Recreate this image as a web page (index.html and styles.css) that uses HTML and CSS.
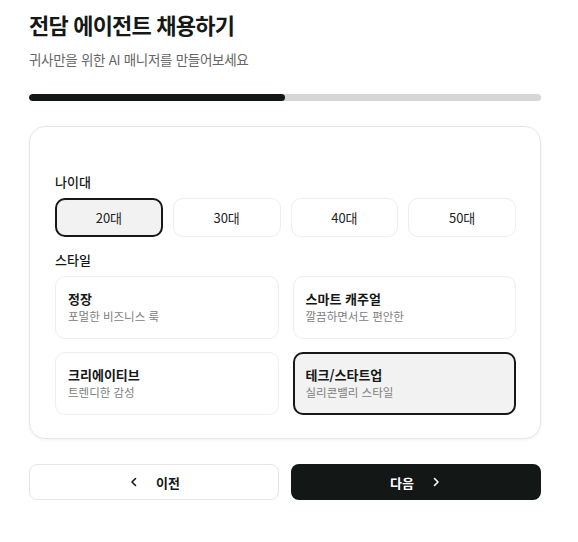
FILE: index.html
```html
<!DOCTYPE html>
<html lang="ko">
<head>
    <meta charset="UTF-8">
    <meta name="viewport" content="width=device-width, initial-scale=1.0">
    <title>전담 에이전트 채용하기</title>
    <link rel="stylesheet" href="styles.css">
</head>
<body>
    <div class="page">
        <div class="header">
            <h1>전담 에이전트 채용하기</h1>
            <p>귀사만을 위한 AI 매니저를 만들어보세요</p>
        </div>

        <!-- Progress -->
        <div class="progress"><div class="progress-fill" style="width: 50%"></div></div>

        <!-- Step card -->
        <div class="step-card">
            <div class="field">
                <h4>나이대</h4>
                <div class="age-grid">
                    <button class="option selected">20대</button>
                    <button class="option">30대</button>
                    <button class="option">40대</button>
                    <button class="option">50대</button>
                </div>
            </div>

            <div class="field">
                <h4>스타일</h4>
                <div class="style-grid">
                    <button class="style-option">
                        <span class="style-name">정장</span>
                        <span class="style-desc">포멀한 비즈니스 룩</span>
                    </button>
                    <button class="style-option">
                        <span class="style-name">스마트 캐주얼</span>
                        <span class="style-desc">깔끔하면서도 편안한</span>
                    </button>
                    <button class="style-option">
                        <span class="style-name">크리에이티브</span>
                        <span class="style-desc">트렌디한 감성</span>
                    </button>
                    <button class="style-option selected">
                        <span class="style-name">테크/스타트업</span>
                        <span class="style-desc">실리콘밸리 스타일</span>
                    </button>
                </div>
            </div>
        </div>

        <!-- Navigation -->
        <div class="nav">
            <button class="nav-btn prev">
                <svg width="12" height="12" viewBox="0 0 12 12"><path d="M7.5 2.5 4 6l3.5 3.5" fill="none" stroke="currentColor" stroke-width="1.6" stroke-linecap="round" stroke-linejoin="round"/></svg>
                이전
            </button>
            <button class="nav-btn next">
                다음
                <svg width="12" height="12" viewBox="0 0 12 12"><path d="M4.5 2.5 8 6 4.5 9.5" fill="none" stroke="currentColor" stroke-width="1.6" stroke-linecap="round" stroke-linejoin="round"/></svg>
            </button>
        </div>
    </div>
</body>
</html>
```

FILE: styles.css
```css
body {
    font-family: "Noto Sans CJK KR", "Noto Sans", sans-serif;
    background-color: #fff;
    color: #151816;
    margin: 0;
    padding: 0;
}
.page {
    width: 512px;
    margin-left: 29px;
    padding-top: 9px;
}
.header h1 {
    font-size: 22px;
    font-weight: 700;
    letter-spacing: -0.8px;
    line-height: 30px;
    margin: 0;
}
.header p {
    font-size: 13.5px;
    color: #666;
    letter-spacing: -0.3px;
    line-height: 18px;
    margin: 11px 0 0;
}

/* Progress */
.progress {
    height: 7px;
    background-color: #d6d6d6;
    border-radius: 4px;
    margin-top: 26px;
    overflow: hidden;
}
.progress-fill {
    height: 100%;
    background-color: #131715;
    border-radius: 4px;
}

/* Step card */
.step-card {
    margin-top: 25px;
    border: 1px solid #e6e6e6;
    border-radius: 16px;
    padding: 46px 24px 23px 25px;
    box-shadow: 0 1px 3px rgba(0, 0, 0, 0.06);
}
.field h4 {
    font-size: 13px;
    font-weight: 500;
    margin: 0 0 7px;
    line-height: 18px;
}
.field + .field {
    margin-top: 14px;
}
.age-grid {
    display: grid;
    grid-template-columns: repeat(4, 1fr);
    gap: 10px;
}
.option {
    font-family: inherit;
    font-size: 13px;
    color: #222;
    background-color: #fff;
    height: 39px;
    border: 1px solid #eeeeee;
    border-radius: 10px;
    cursor: pointer;
}
.option.selected,
.style-option.selected {
    border: 2px solid #151816;
    background-color: #f2f2f2;
}
.style-grid {
    display: grid;
    grid-template-columns: 1fr 1fr;
    gap: 13px 14px;
}
.style-option {
    font-family: inherit;
    display: flex;
    flex-direction: column;
    align-items: flex-start;
    text-align: left;
    height: 63px;
    padding: 12px 12px;
    background-color: #fff;
    border: 1px solid #eeeeee;
    border-radius: 10px;
    cursor: pointer;
}
.style-option.selected {
    padding: 11px 11px;
}
.style-name {
    font-size: 13px;
    font-weight: 700;
    color: #151816;
    line-height: 19px;
}
.style-desc {
    font-size: 11.5px;
    color: #808080;
    line-height: 17px;
}

/* Navigation */
.nav {
    display: grid;
    grid-template-columns: 1fr 1fr;
    gap: 12px;
    margin-top: 25px;
}
.nav-btn {
    font-family: inherit;
    font-size: 13px;
    font-weight: 700;
    height: 36px;
    border-radius: 8px;
    display: flex;
    align-items: center;
    justify-content: center;
    gap: 16px;
    cursor: pointer;
}
.nav-btn.prev {
    background-color: #fff;
    color: #151816;
    border: 1px solid #e6e6e6;
}
.nav-btn.next {
    background-color: #131715;
    color: #fff;
    border: none;
}
```
